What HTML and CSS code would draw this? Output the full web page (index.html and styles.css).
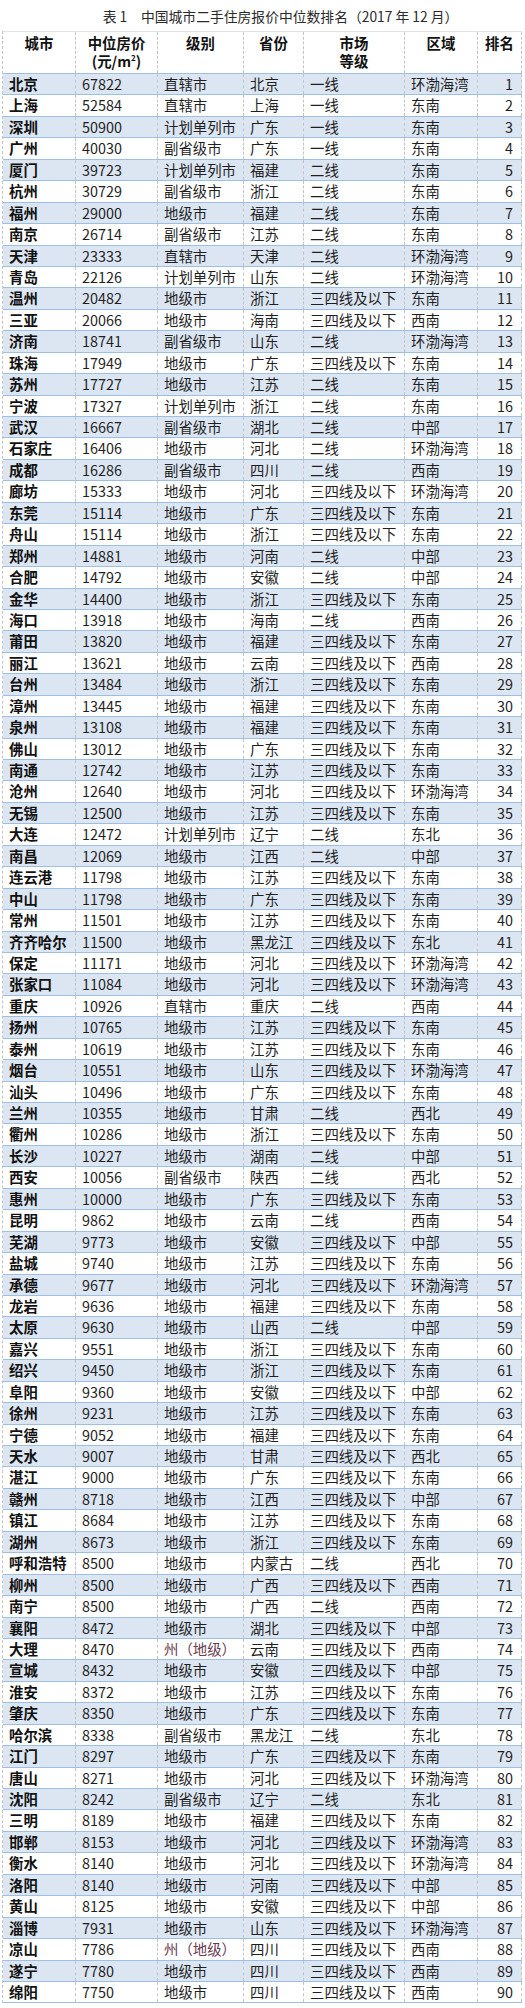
FILE: index.html
```html
<!DOCTYPE html>
<html lang="zh">
<head>
<meta charset="utf-8">
<title>中国城市二手住房报价中位数排名</title>
<link rel="stylesheet" href="styles.css">
</head>
<body>
<div class="title">表 1　中国城市二手住房报价中位数排名（2017 年 12 月）</div>
<div class="table">
<div class="head"><span>城市</span><span>中位房价<br>(元/m<sup>2</sup>)</span><span>级别</span><span>省份</span><span>市场<br>等级</span><span>区域</span><span>排名</span></div>
<div class="body">
<div class="row"><span>北京</span><span>67822</span><span>直辖市</span><span>北京</span><span>一线</span><span>环渤海湾</span><span>1</span></div>
<div class="row"><span>上海</span><span>52584</span><span>直辖市</span><span>上海</span><span>一线</span><span>东南</span><span>2</span></div>
<div class="row"><span>深圳</span><span>50900</span><span>计划单列市</span><span>广东</span><span>一线</span><span>东南</span><span>3</span></div>
<div class="row"><span>广州</span><span>40030</span><span>副省级市</span><span>广东</span><span>一线</span><span>东南</span><span>4</span></div>
<div class="row"><span>厦门</span><span>39723</span><span>计划单列市</span><span>福建</span><span>二线</span><span>东南</span><span>5</span></div>
<div class="row"><span>杭州</span><span>30729</span><span>副省级市</span><span>浙江</span><span>二线</span><span>东南</span><span>6</span></div>
<div class="row"><span>福州</span><span>29000</span><span>地级市</span><span>福建</span><span>二线</span><span>东南</span><span>7</span></div>
<div class="row"><span>南京</span><span>26714</span><span>副省级市</span><span>江苏</span><span>二线</span><span>东南</span><span>8</span></div>
<div class="row"><span>天津</span><span>23333</span><span>直辖市</span><span>天津</span><span>二线</span><span>环渤海湾</span><span>9</span></div>
<div class="row"><span>青岛</span><span>22126</span><span>计划单列市</span><span>山东</span><span>二线</span><span>环渤海湾</span><span>10</span></div>
<div class="row"><span>温州</span><span>20482</span><span>地级市</span><span>浙江</span><span>三四线及以下</span><span>东南</span><span>11</span></div>
<div class="row"><span>三亚</span><span>20066</span><span>地级市</span><span>海南</span><span>三四线及以下</span><span>西南</span><span>12</span></div>
<div class="row"><span>济南</span><span>18741</span><span>副省级市</span><span>山东</span><span>二线</span><span>环渤海湾</span><span>13</span></div>
<div class="row"><span>珠海</span><span>17949</span><span>地级市</span><span>广东</span><span>三四线及以下</span><span>东南</span><span>14</span></div>
<div class="row"><span>苏州</span><span>17727</span><span>地级市</span><span>江苏</span><span>二线</span><span>东南</span><span>15</span></div>
<div class="row"><span>宁波</span><span>17327</span><span>计划单列市</span><span>浙江</span><span>二线</span><span>东南</span><span>16</span></div>
<div class="row"><span>武汉</span><span>16667</span><span>副省级市</span><span>湖北</span><span>二线</span><span>中部</span><span>17</span></div>
<div class="row"><span>石家庄</span><span>16406</span><span>地级市</span><span>河北</span><span>二线</span><span>环渤海湾</span><span>18</span></div>
<div class="row"><span>成都</span><span>16286</span><span>副省级市</span><span>四川</span><span>二线</span><span>西南</span><span>19</span></div>
<div class="row"><span>廊坊</span><span>15333</span><span>地级市</span><span>河北</span><span>三四线及以下</span><span>环渤海湾</span><span>20</span></div>
<div class="row"><span>东莞</span><span>15114</span><span>地级市</span><span>广东</span><span>三四线及以下</span><span>东南</span><span>21</span></div>
<div class="row"><span>舟山</span><span>15114</span><span>地级市</span><span>浙江</span><span>三四线及以下</span><span>东南</span><span>22</span></div>
<div class="row"><span>郑州</span><span>14881</span><span>地级市</span><span>河南</span><span>二线</span><span>中部</span><span>23</span></div>
<div class="row"><span>合肥</span><span>14792</span><span>地级市</span><span>安徽</span><span>二线</span><span>中部</span><span>24</span></div>
<div class="row"><span>金华</span><span>14400</span><span>地级市</span><span>浙江</span><span>三四线及以下</span><span>东南</span><span>25</span></div>
<div class="row"><span>海口</span><span>13918</span><span>地级市</span><span>海南</span><span>二线</span><span>西南</span><span>26</span></div>
<div class="row"><span>莆田</span><span>13820</span><span>地级市</span><span>福建</span><span>三四线及以下</span><span>东南</span><span>27</span></div>
<div class="row"><span>丽江</span><span>13621</span><span>地级市</span><span>云南</span><span>三四线及以下</span><span>西南</span><span>28</span></div>
<div class="row"><span>台州</span><span>13484</span><span>地级市</span><span>浙江</span><span>三四线及以下</span><span>东南</span><span>29</span></div>
<div class="row"><span>漳州</span><span>13445</span><span>地级市</span><span>福建</span><span>三四线及以下</span><span>东南</span><span>30</span></div>
<div class="row"><span>泉州</span><span>13108</span><span>地级市</span><span>福建</span><span>三四线及以下</span><span>东南</span><span>31</span></div>
<div class="row"><span>佛山</span><span>13012</span><span>地级市</span><span>广东</span><span>三四线及以下</span><span>东南</span><span>32</span></div>
<div class="row"><span>南通</span><span>12742</span><span>地级市</span><span>江苏</span><span>三四线及以下</span><span>东南</span><span>33</span></div>
<div class="row"><span>沧州</span><span>12640</span><span>地级市</span><span>河北</span><span>三四线及以下</span><span>环渤海湾</span><span>34</span></div>
<div class="row"><span>无锡</span><span>12500</span><span>地级市</span><span>江苏</span><span>三四线及以下</span><span>东南</span><span>35</span></div>
<div class="row"><span>大连</span><span>12472</span><span>计划单列市</span><span>辽宁</span><span>二线</span><span>东北</span><span>36</span></div>
<div class="row"><span>南昌</span><span>12069</span><span>地级市</span><span>江西</span><span>二线</span><span>中部</span><span>37</span></div>
<div class="row"><span>连云港</span><span>11798</span><span>地级市</span><span>江苏</span><span>三四线及以下</span><span>东南</span><span>38</span></div>
<div class="row"><span>中山</span><span>11798</span><span>地级市</span><span>广东</span><span>三四线及以下</span><span>东南</span><span>39</span></div>
<div class="row"><span>常州</span><span>11501</span><span>地级市</span><span>江苏</span><span>三四线及以下</span><span>东南</span><span>40</span></div>
<div class="row"><span>齐齐哈尔</span><span>11500</span><span>地级市</span><span>黑龙江</span><span>三四线及以下</span><span>东北</span><span>41</span></div>
<div class="row"><span>保定</span><span>11171</span><span>地级市</span><span>河北</span><span>三四线及以下</span><span>环渤海湾</span><span>42</span></div>
<div class="row"><span>张家口</span><span>11084</span><span>地级市</span><span>河北</span><span>三四线及以下</span><span>环渤海湾</span><span>43</span></div>
<div class="row"><span>重庆</span><span>10926</span><span>直辖市</span><span>重庆</span><span>二线</span><span>西南</span><span>44</span></div>
<div class="row"><span>扬州</span><span>10765</span><span>地级市</span><span>江苏</span><span>三四线及以下</span><span>东南</span><span>45</span></div>
<div class="row"><span>泰州</span><span>10619</span><span>地级市</span><span>江苏</span><span>三四线及以下</span><span>东南</span><span>46</span></div>
<div class="row"><span>烟台</span><span>10551</span><span>地级市</span><span>山东</span><span>三四线及以下</span><span>环渤海湾</span><span>47</span></div>
<div class="row"><span>汕头</span><span>10496</span><span>地级市</span><span>广东</span><span>三四线及以下</span><span>东南</span><span>48</span></div>
<div class="row"><span>兰州</span><span>10355</span><span>地级市</span><span>甘肃</span><span>二线</span><span>西北</span><span>49</span></div>
<div class="row"><span>衢州</span><span>10286</span><span>地级市</span><span>浙江</span><span>三四线及以下</span><span>东南</span><span>50</span></div>
<div class="row"><span>长沙</span><span>10227</span><span>地级市</span><span>湖南</span><span>二线</span><span>中部</span><span>51</span></div>
<div class="row"><span>西安</span><span>10056</span><span>副省级市</span><span>陕西</span><span>二线</span><span>西北</span><span>52</span></div>
<div class="row"><span>惠州</span><span>10000</span><span>地级市</span><span>广东</span><span>三四线及以下</span><span>东南</span><span>53</span></div>
<div class="row"><span>昆明</span><span>9862</span><span>地级市</span><span>云南</span><span>二线</span><span>西南</span><span>54</span></div>
<div class="row"><span>芜湖</span><span>9773</span><span>地级市</span><span>安徽</span><span>三四线及以下</span><span>中部</span><span>55</span></div>
<div class="row"><span>盐城</span><span>9740</span><span>地级市</span><span>江苏</span><span>三四线及以下</span><span>东南</span><span>56</span></div>
<div class="row"><span>承德</span><span>9677</span><span>地级市</span><span>河北</span><span>三四线及以下</span><span>环渤海湾</span><span>57</span></div>
<div class="row"><span>龙岩</span><span>9636</span><span>地级市</span><span>福建</span><span>三四线及以下</span><span>东南</span><span>58</span></div>
<div class="row"><span>太原</span><span>9630</span><span>地级市</span><span>山西</span><span>二线</span><span>中部</span><span>59</span></div>
<div class="row"><span>嘉兴</span><span>9551</span><span>地级市</span><span>浙江</span><span>三四线及以下</span><span>东南</span><span>60</span></div>
<div class="row"><span>绍兴</span><span>9450</span><span>地级市</span><span>浙江</span><span>三四线及以下</span><span>东南</span><span>61</span></div>
<div class="row"><span>阜阳</span><span>9360</span><span>地级市</span><span>安徽</span><span>三四线及以下</span><span>中部</span><span>62</span></div>
<div class="row"><span>徐州</span><span>9231</span><span>地级市</span><span>江苏</span><span>三四线及以下</span><span>东南</span><span>63</span></div>
<div class="row"><span>宁德</span><span>9052</span><span>地级市</span><span>福建</span><span>三四线及以下</span><span>东南</span><span>64</span></div>
<div class="row"><span>天水</span><span>9007</span><span>地级市</span><span>甘肃</span><span>三四线及以下</span><span>西北</span><span>65</span></div>
<div class="row"><span>湛江</span><span>9000</span><span>地级市</span><span>广东</span><span>三四线及以下</span><span>东南</span><span>66</span></div>
<div class="row"><span>赣州</span><span>8718</span><span>地级市</span><span>江西</span><span>三四线及以下</span><span>中部</span><span>67</span></div>
<div class="row"><span>镇江</span><span>8684</span><span>地级市</span><span>江苏</span><span>三四线及以下</span><span>东南</span><span>68</span></div>
<div class="row"><span>湖州</span><span>8673</span><span>地级市</span><span>浙江</span><span>三四线及以下</span><span>东南</span><span>69</span></div>
<div class="row"><span>呼和浩特</span><span>8500</span><span>地级市</span><span>内蒙古</span><span>二线</span><span>西北</span><span>70</span></div>
<div class="row"><span>柳州</span><span>8500</span><span>地级市</span><span>广西</span><span>三四线及以下</span><span>西南</span><span>71</span></div>
<div class="row"><span>南宁</span><span>8500</span><span>地级市</span><span>广西</span><span>二线</span><span>西南</span><span>72</span></div>
<div class="row"><span>襄阳</span><span>8472</span><span>地级市</span><span>湖北</span><span>三四线及以下</span><span>中部</span><span>73</span></div>
<div class="row"><span>大理</span><span>8470</span><span class="zhou">州（地级）</span><span>云南</span><span>三四线及以下</span><span>西南</span><span>74</span></div>
<div class="row"><span>宣城</span><span>8432</span><span>地级市</span><span>安徽</span><span>三四线及以下</span><span>中部</span><span>75</span></div>
<div class="row"><span>淮安</span><span>8372</span><span>地级市</span><span>江苏</span><span>三四线及以下</span><span>东南</span><span>76</span></div>
<div class="row"><span>肇庆</span><span>8350</span><span>地级市</span><span>广东</span><span>三四线及以下</span><span>东南</span><span>77</span></div>
<div class="row"><span>哈尔滨</span><span>8338</span><span>副省级市</span><span>黑龙江</span><span>二线</span><span>东北</span><span>78</span></div>
<div class="row"><span>江门</span><span>8297</span><span>地级市</span><span>广东</span><span>三四线及以下</span><span>东南</span><span>79</span></div>
<div class="row"><span>唐山</span><span>8271</span><span>地级市</span><span>河北</span><span>三四线及以下</span><span>环渤海湾</span><span>80</span></div>
<div class="row"><span>沈阳</span><span>8242</span><span>副省级市</span><span>辽宁</span><span>二线</span><span>东北</span><span>81</span></div>
<div class="row"><span>三明</span><span>8189</span><span>地级市</span><span>福建</span><span>三四线及以下</span><span>东南</span><span>82</span></div>
<div class="row"><span>邯郸</span><span>8153</span><span>地级市</span><span>河北</span><span>三四线及以下</span><span>环渤海湾</span><span>83</span></div>
<div class="row"><span>衡水</span><span>8140</span><span>地级市</span><span>河北</span><span>三四线及以下</span><span>环渤海湾</span><span>84</span></div>
<div class="row"><span>洛阳</span><span>8140</span><span>地级市</span><span>河南</span><span>三四线及以下</span><span>中部</span><span>85</span></div>
<div class="row"><span>黄山</span><span>8125</span><span>地级市</span><span>安徽</span><span>三四线及以下</span><span>中部</span><span>86</span></div>
<div class="row"><span>淄博</span><span>7931</span><span>地级市</span><span>山东</span><span>三四线及以下</span><span>环渤海湾</span><span>87</span></div>
<div class="row"><span>凉山</span><span>7786</span><span class="zhou">州（地级）</span><span>四川</span><span>三四线及以下</span><span>西南</span><span>88</span></div>
<div class="row"><span>遂宁</span><span>7780</span><span>地级市</span><span>四川</span><span>三四线及以下</span><span>西南</span><span>89</span></div>
<div class="row"><span>绵阳</span><span>7750</span><span>地级市</span><span>四川</span><span>三四线及以下</span><span>西南</span><span>90</span></div>
</div>
</div>
</body>
</html>
```

FILE: styles.css
```css
html, body {
  margin: 0;
  padding: 0;
  background: #ffffff;
}

body {
  font-family: "Noto Sans CJK SC", "Noto Sans", sans-serif;
  color: #1f1f1f;
  font-size: 14.4px;
}

.title {
  height: 31px;
  display: flex;
  align-items: center;
  justify-content: center;
  padding-left: 36px;
  font-size: 13.8px;
  color: #2a2a2a;
  white-space: nowrap;
}

.table {
  margin-left: 2px;
  width: 520px;
  border-left: 1px dashed #c4c4c4;
  box-sizing: border-box;
}

.head,
.row {
  display: grid;
  grid-template-columns: 73px 82px 86px 60px 101px 73px 44px;
}

.head > span,
.row > span {
  box-sizing: border-box;
  border-right: 1px dashed #c4c4c4;
  white-space: nowrap;
  overflow: hidden;
}

.head {
  height: 43px;
  box-sizing: border-box;
  border-top: 1px solid #e2e2e2;
  border-bottom: 1px solid #9dbfe2;
  font-weight: bold;
  color: #111;
}

.head > span {
  text-align: center;
  line-height: 18px;
  padding-top: 2px;
}

.head sup {
  font-size: 8px;
  vertical-align: 6px;
  line-height: 0;
}

.row {
  height: 21.45px;
  box-sizing: border-box;
  border-bottom: 1px solid #9dbfe2;
}

.row > span {
  line-height: 20px;
  padding-left: 6px;
}

.row > span:first-child {
  font-weight: bold;
  color: #111;
}

.row > span:last-child {
  text-align: right;
  padding-left: 0;
  padding-right: 8px;
}

.body > .row:nth-child(odd) {
  background: #dce6f2;
}

.zhou {
  color: #6b3c52;
}
```
